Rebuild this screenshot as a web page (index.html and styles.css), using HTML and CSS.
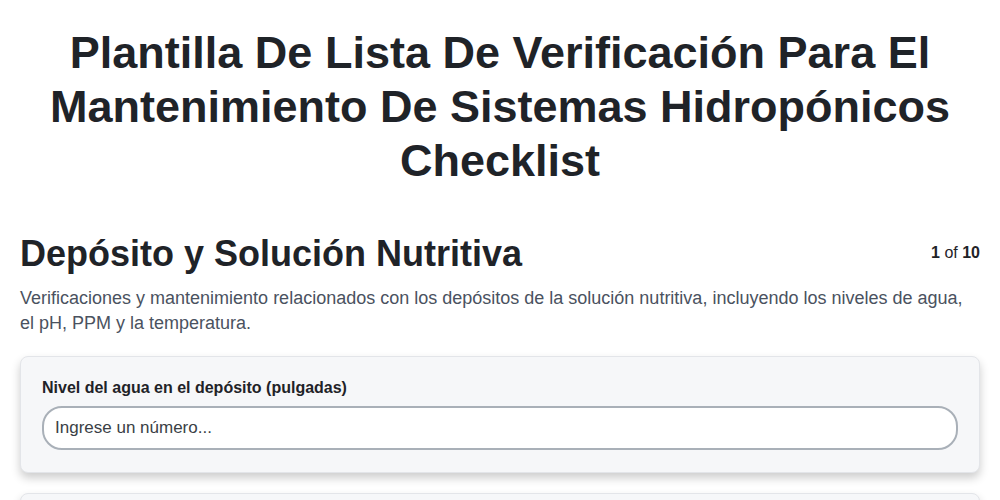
FILE: index.html
```html
<!DOCTYPE html>
<html lang="es">
<head>
    <meta charset="UTF-8">
    <meta name="viewport" content="width=device-width, initial-scale=1.0">
    <title>Plantilla De Lista De Verificación - Sistemas Hidropónicos</title>
    <link rel="stylesheet" href="styles.css">
</head>
<body>
    <main class="page">
        <h1 class="page-title">Plantilla De Lista De Verificación Para El Mantenimiento De Sistemas Hidropónicos Checklist</h1>

        <section class="section">
            <div class="section-head">
                <h2>Depósito y Solución Nutritiva</h2>
                <span class="section-count"><b>1</b> of <b>10</b></span>
            </div>
            <p class="section-desc">Verificaciones y mantenimiento relacionados con los depósitos de la solución nutritiva, incluyendo los niveles de agua, el pH, PPM y la temperatura.</p>

            <div class="item-card">
                <label for="waterLevel">Nivel del agua en el depósito (pulgadas)</label>
                <input type="number" id="waterLevel" name="waterLevel" placeholder="Ingrese un número...">
            </div>

            <div class="item-card">
                <label for="ph">Nivel de pH de la solución</label>
                <input type="number" id="ph" name="ph" placeholder="Ingrese un número...">
            </div>
        </section>
    </main>
</body>
</html>
```

FILE: styles.css
```css
body {
    font-family: 'Liberation Sans', Arial, sans-serif;
    margin: 0;
    padding: 0;
    background-color: #fff;
    color: #1f2328;
}
.page {
    padding: 0 20px;
}
.page-title {
    font-size: 45px;
    line-height: 54px;
    text-align: center;
    margin: 26px 0 44px;
    color: #1f2328;
}
.section-head {
    display: flex;
    justify-content: space-between;
    align-items: flex-start;
}
.section-head h2 {
    font-size: 36px;
    line-height: 44px;
    margin: 0;
}
.section-count {
    font-size: 16px;
    margin-top: 12px;
    color: #1f2328;
}
.section-desc {
    font-size: 18px;
    line-height: 25px;
    color: #4a5260;
    margin: 10px 0 20px;
}
.item-card {
    background-color: #f6f7f9;
    border: 1px solid #e3e5e9;
    border-radius: 8px;
    box-shadow: 0 5px 10px rgba(0, 0, 0, 0.2);
    padding: 22px 21px 22px;
    margin-bottom: 20px;
}
.item-card label {
    display: block;
    font-size: 16px;
    font-weight: bold;
    margin-bottom: 9px;
    color: #1f2328;
}
.item-card input {
    display: block;
    width: 100%;
    box-sizing: border-box;
    height: 44px;
    padding: 0 11px;
    border: 2px solid #a9b0b8;
    border-radius: 20px;
    font-family: inherit;
    font-size: 17px;
    background-color: #fff;
}
.item-card input::placeholder {
    color: #3a3f45;
}
```
